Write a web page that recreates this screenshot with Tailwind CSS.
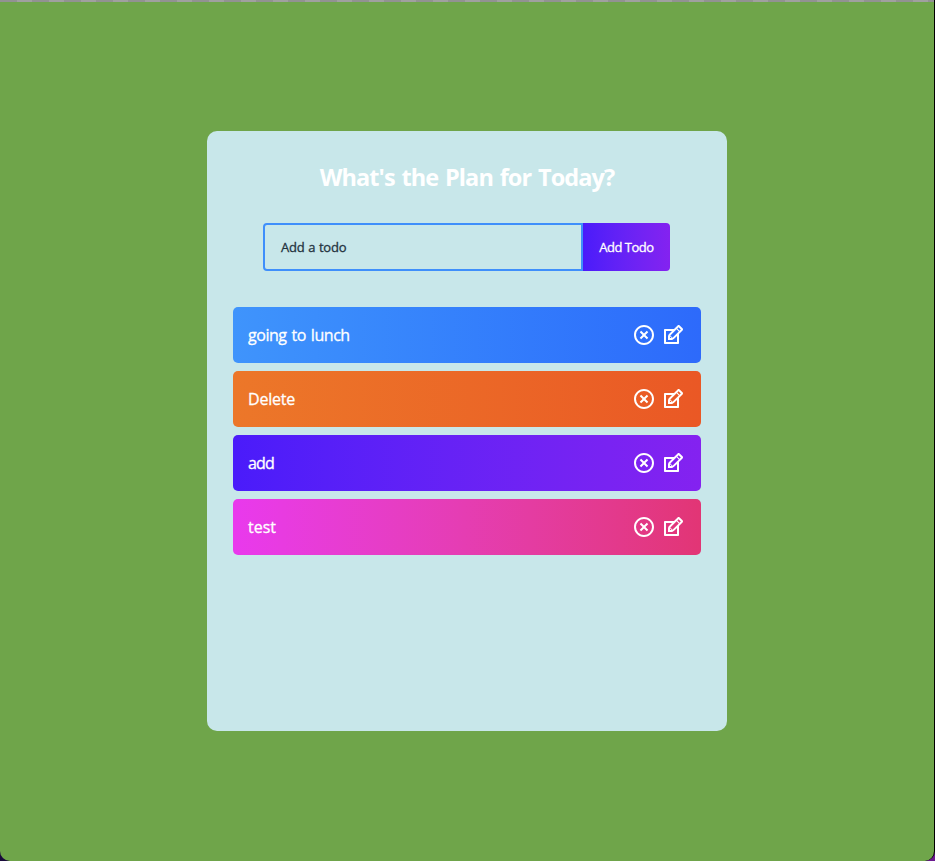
<!DOCTYPE html>
<html lang="en">
<head>
<meta charset="utf-8">
<title>Todo</title>
<script src="https://cdn.jsdelivr.net/npm/@tailwindcss/browser@4"></script>
</head>
<body class="bg-[linear-gradient(90deg,#190a3b,#6b198f)] h-[861px] overflow-hidden font-['Trebuchet_MS','Open_Sans',sans-serif]">
<svg class="hidden">
  <symbol id="close" viewBox="0 0 24 24"><path d="M12 22C6.477 22 2 17.523 2 12S6.477 2 12 2s10 4.477 10 10-4.477 10-10 10zm0-2a8 8 0 1 0 0-16 8 8 0 0 0 0 16zm0-9.414l2.828-2.829 1.415 1.415L13.414 12l2.829 2.828-1.415 1.415L12 13.414l-2.828 2.829-1.415-1.415L10.586 12 7.757 9.172l1.415-1.415L12 10.586z"/></symbol>
  <symbol id="edit" viewBox="0 0 24 24"><path d="M21.561 5.318l-2.879-2.879c-.293-.293-.677-.439-1.061-.439-.385 0-.768.146-1.061.439l-3.56 3.561h-9c-.552 0-1 .447-1 1v13c0 .553.448 1 1 1h13c.552 0 1-.447 1-1v-9l3.561-3.561c.293-.293.439-.677.439-1.061s-.146-.767-.439-1.061zm-10.061 9.354l-2.172-2.172 6.293-6.293 2.172 2.172-6.293 6.293zm-2.561-1.339l1.756 1.728-1.695-.061-.061-1.667zm7.061 5.667h-11v-11h6l-3.18 3.18c-.293.293-.478.812-.629 1.289-.16.5-.191 1.056-.191 1.47v3.061h3.061c.414 0 1.108-.1 1.571-.29.464-.19.896-.347 1.188-.64l3.18-3.07v6zm2.5-11.328l-2.172-2.172 1.293-1.293 2.171 2.172-1.292 1.293z"/></symbol>
</svg>
<div class="h-[861px] rounded-b-[10px] overflow-hidden flex flex-col bg-[#6fa54a] border-r border-black">
  <div class="h-[2px] shrink-0 bg-[repeating-linear-gradient(90deg,#929292_0,#929292_17px,#a0a0a0_17px,#a0a0a0_32px)]"></div>
  <main class="w-[520px] h-[600px] ml-[207px] mt-[129px] rounded-[10px] bg-[#c8e7ea] flex flex-col items-center pt-8">
    <h1 class="text-[23.5px] leading-[28px] font-bold text-white whitespace-nowrap tracking-[-0.9px] [word-spacing:1.5px]">What's the Plan for Today?</h1>
    <form class="flex h-12 mt-8 mr-px text-[13px] [-webkit-text-stroke:0.3px]">
      <div class="w-80 border-2 border-[#3f8ffb] rounded-l-[4px] pl-4 pt-px flex items-center text-[#24333f]"><span class="tracking-[-0.2px] [word-spacing:0.5px]">Add a todo</span></div>
      <div class="w-[87px] rounded-r-[4px] pt-px bg-linear-to-r from-[#4a1bfa] to-[#8422f0] text-white flex items-center justify-center"><span class="tracking-[-0.5px]">Add Todo</span></div>
    </form>
    <ul class="w-[468px] mt-9 flex flex-col gap-2 text-white text-[16px] [-webkit-text-stroke:0.3px]">
      <li class="h-14 rounded-[5px] flex items-center pl-[15px] pr-4 bg-linear-to-r from-[#3f94fc] to-[#2d6afb]"><span class="grow tracking-[-0.45px] [word-spacing:1.2px]">going to lunch</span><svg class="size-6 mr-[5px] fill-white"><use href="#close"/></svg><svg class="size-6 fill-white"><use href="#edit"/></svg></li>
      <li class="h-14 rounded-[5px] flex items-center pl-[15px] pr-4 bg-linear-to-r from-[#ec7729] to-[#ea5825]"><span class="grow tracking-[-0.2px]">Delete</span><svg class="size-6 mr-[5px] fill-white"><use href="#close"/></svg><svg class="size-6 fill-white"><use href="#edit"/></svg></li>
      <li class="h-14 rounded-[5px] flex items-center pl-[15px] pr-4 bg-linear-to-r from-[#4a1bfa] to-[#8422f0]"><span class="grow tracking-[-0.8px]">add</span><svg class="size-6 mr-[5px] fill-white"><use href="#close"/></svg><svg class="size-6 fill-white"><use href="#edit"/></svg></li>
      <li class="h-14 rounded-[5px] flex items-center pl-[15px] pr-4 bg-linear-to-r from-[#e939ed] to-[#e23575]"><span class="grow">test</span><svg class="size-6 mr-[5px] fill-white"><use href="#close"/></svg><svg class="size-6 fill-white"><use href="#edit"/></svg></li>
    </ul>
  </main>
</div>
</body>
</html>
